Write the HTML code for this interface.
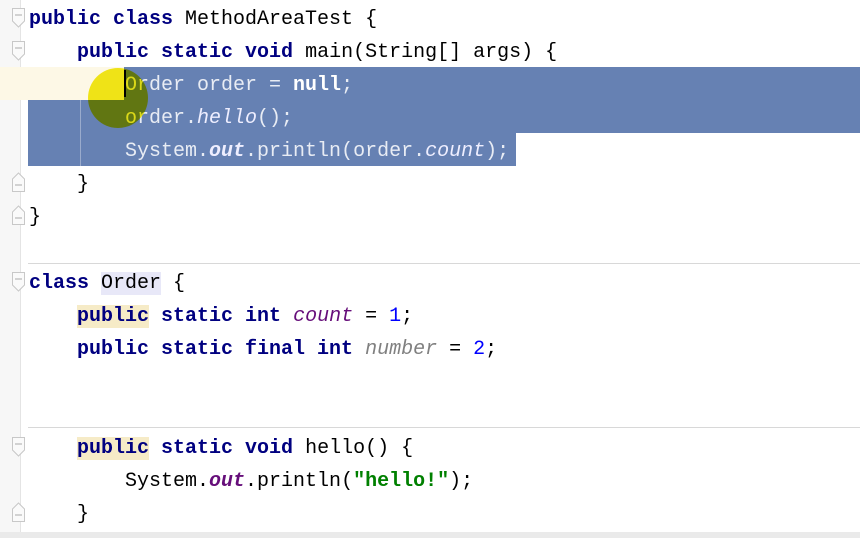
<!DOCTYPE html>
<html><head><meta charset="utf-8"><style>
html,body{margin:0;padding:0}
body{width:860px;height:538px;background:#fff;position:relative;overflow:hidden;font-family:"Liberation Mono",monospace;font-size:20px}
.g{position:absolute;left:0;top:0;width:20px;height:532px;background:#f7f7f7;border-right:1px solid #e4e4e4}
.l{position:absolute;left:29px;height:33px;line-height:33px;white-space:pre;color:#000}
.k{color:#000080;font-weight:bold}
.i{font-style:italic;color:#660e7a}
.ib{font-style:italic;font-weight:bold;color:#660e7a}
.n{color:#0000ff}
.s{color:#008000;font-weight:bold}
.gr{font-style:italic;color:#808080}
.hl{background:#f6ebc7}
.hb{background:#e8e8f8}
.sel{position:absolute;background:#6681b3}
.w{color:#e8ecf4}
.w .k{color:#fff}
.w .i,.w .ib{color:#eef}
.sep{position:absolute;left:28px;right:0;height:1px;background:#d8d8d8}
.fold{position:absolute;left:12px;width:13px;height:20px}
</style></head><body>
<div class="g"></div>
<div style="position:absolute;left:0;top:67px;width:124px;height:33px;background:#fdf8e6"></div>
<div class="sel" style="left:124px;top:67px;width:736px;height:33px"></div>
<div class="sel" style="left:28px;top:100px;width:832px;height:33px"></div>
<div class="sel" style="left:28px;top:133px;width:488px;height:33px"></div>
<div style="position:absolute;left:80px;top:100px;width:1px;height:66px;background:#9aabcc"></div>
<div class="sep" style="top:263px"></div>
<div class="sep" style="top:427px"></div>
<svg class="fold" style="top:8px" viewBox="0 0 13 20"><path d="M0.5 0.5H12.5V13L6.5 19L0.5 13Z" fill="#fafafa" stroke="#c8c8c8"/><path d="M3 7H10" stroke="#aaa"/></svg>
<svg class="fold" style="top:41px" viewBox="0 0 13 20"><path d="M0.5 0.5H12.5V13L6.5 19L0.5 13Z" fill="#fafafa" stroke="#c8c8c8"/><path d="M3 7H10" stroke="#aaa"/></svg>
<svg class="fold" style="top:172px" viewBox="0 0 13 20"><path d="M0.5 19.5H12.5V7L6.5 1L0.5 7Z" fill="#fafafa" stroke="#c8c8c8"/><path d="M3 13H10" stroke="#aaa"/></svg>
<svg class="fold" style="top:205px" viewBox="0 0 13 20"><path d="M0.5 19.5H12.5V7L6.5 1L0.5 7Z" fill="#fafafa" stroke="#c8c8c8"/><path d="M3 13H10" stroke="#aaa"/></svg>
<svg class="fold" style="top:272px" viewBox="0 0 13 20"><path d="M0.5 0.5H12.5V13L6.5 19L0.5 13Z" fill="#fafafa" stroke="#c8c8c8"/><path d="M3 7H10" stroke="#aaa"/></svg>
<svg class="fold" style="top:437px" viewBox="0 0 13 20"><path d="M0.5 0.5H12.5V13L6.5 19L0.5 13Z" fill="#fafafa" stroke="#c8c8c8"/><path d="M3 7H10" stroke="#aaa"/></svg>
<svg class="fold" style="top:502px" viewBox="0 0 13 20"><path d="M0.5 19.5H12.5V7L6.5 1L0.5 7Z" fill="#fafafa" stroke="#c8c8c8"/><path d="M3 13H10" stroke="#aaa"/></svg>
<div class="l" style="top:3px"><span class="k">public class</span> MethodAreaTest {</div>
<div class="l" style="top:36px">    <span class="k">public static void</span> main(String[] args) {</div>
<div class="l w" style="top:69px">        Order order = <span class="k">null</span>;</div>
<div class="l w" style="top:102px">        order.<span class="i">hello</span>();</div>
<div class="l w" style="top:135px">        System.<span class="ib">out</span>.println(order.<span class="i">count</span>);</div>
<div class="l" style="top:168px">    }</div>
<div class="l" style="top:201px">}</div>
<div class="l" style="top:267px"><span class="k">class</span> <span class="hb">Order</span> {</div>
<div class="l" style="top:300px">    <span class="k"><span class="hl">public</span> static int</span> <span class="i">count</span> = <span class="n">1</span>;</div>
<div class="l" style="top:333px">    <span class="k">public static final int</span> <span class="gr">number</span> = <span class="n">2</span>;</div>
<div class="l" style="top:432px">    <span class="k"><span class="hl">public</span> static void</span> hello() {</div>
<div class="l" style="top:465px">        System.<span class="ib">out</span>.println(<span class="s">"hello!"</span>);</div>
<div class="l" style="top:498px">    }</div>
<div style="position:absolute;left:124px;top:70px;width:2px;height:27px;background:#000"></div>
<div style="position:absolute;left:88px;top:68px;width:60px;height:60px;border-radius:50%;background:#f0e800;mix-blend-mode:multiply;opacity:0.9"></div>
<div style="position:absolute;left:0;top:532px;width:860px;height:6px;background:#eaeaea"></div>
</body></html>
